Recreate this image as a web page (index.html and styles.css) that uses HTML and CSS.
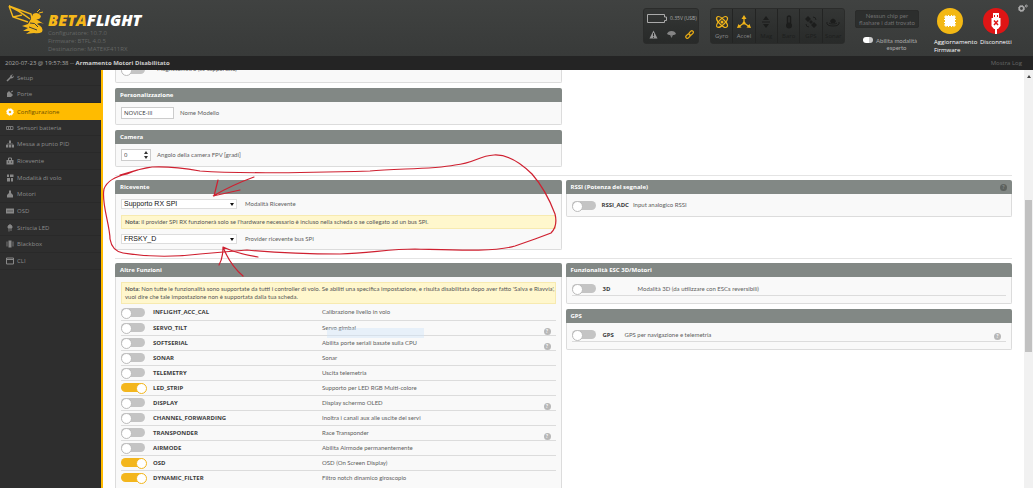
FILE: index.html
```html
<!doctype html>
<html lang="it">
<head>
<meta charset="utf-8">
<title>Betaflight Configurator</title>
<meta name="viewport" content="width=device-width,initial-scale=1">
<link rel="stylesheet" href="styles.css">
</head>
<body>

<header class="topbar">
  <div class="brand">
    <svg class="bee" viewBox="0 0 38 30" aria-hidden="true">
      <path d="M1 1 L23 9 L24 14 M1 1 L5 12 L20 17 M1 1 Q12 6 22 14 M5 12 L14 10" fill="none" stroke="#f5b81a" stroke-width="1.4"/>
      <path d="M25 9 Q30 6 33 11 Q32 15 28 14 L36 19 Q32 17 29 19 Q36 22 34 27 Q31 29 26 28 L18 29 L22 26 L15 26 L20 23 L14 21 L20 19 L23 14 Z" fill="#f5b81a"/>
      <path d="M29 7 L32 4 M31 8 L35 7" stroke="#f5b81a" fill="none"/>
      <path d="M22 18 Q27 17 30 22 M21 22 L29 25" stroke="#3b3c3b" fill="none"/>
    </svg>
    <div class="brand-text">
      <div class="logo"><span>BETA</span>FLIGHT</div>
      <div class="versions">Configuratore: 10.7.0<br>Firmware: BTFL 4.0.5<br>Destinazione: MATEKF411RX</div>
    </div>
  </div>

  <div class="panel battery">
    <div class="battery-top">
      <svg width="20" height="9" viewBox="0 0 20 9" aria-hidden="true"><path d="M.5 .5H17.5V3H19.5V6.500H17.5V8.500H.5Z" fill="none" stroke="#aaa"/></svg>
      <span>0.35V (USB)</span>
    </div>
    <div class="battery-icons">
      <svg width="9" height="9" viewBox="0 0 9 9" aria-hidden="true"><path d="M4.500 .5L8.500 8.500H.5Z" fill="#999"/><path d="M4.500 3V6M4.500 6.800V7.800" stroke="#2a2a2a"/></svg>
      <svg width="9" height="9" viewBox="0 0 9 9" aria-hidden="true"><path d="M0 4Q1 1 4.500 1T9 4L7 5H2Z" fill="#858585"/><path d="M3 5H6L4.500 8Z" fill="#777"/></svg>
      <svg width="9" height="9" viewBox="0 0 9 9" aria-hidden="true"><g fill="none" stroke="#e5a915" stroke-width="1.2"><rect x="3.600" y="1.600" width="5" height="3" rx="1.500" transform="rotate(-45 6 3)"/><rect x=".4" y="4.600" width="5" height="3" rx="1.500" transform="rotate(-45 3 6)"/></g></svg>
    </div>
  </div>

  <div class="panel sensors">
    <div class="sensor on">
      <svg viewBox="0 0 14 14" aria-hidden="true"><g fill="none" stroke="#f0b41a" stroke-width="1.200"><ellipse cx="7" cy="7" rx="7" ry="2.800" transform="rotate(45 7 7)"/><ellipse cx="7" cy="7" rx="7" ry="2.800" transform="rotate(-45 7 7)"/></g><circle cx="7" cy="7" r="1.500" fill="#f0b41a"/></svg>
      <span>Gyro</span>
    </div>
    <div class="sensor on">
      <svg viewBox="0 0 14 14" aria-hidden="true"><path d="M7 8V2M7 8L2 11.500M7 8L12 11.500" stroke="#f0b41a" stroke-width="1.300"/><path d="M7 0L9.500 4H4.500ZM0 13L1.500 9L4.500 12.500ZM14 13L12.500 9L9.500 12.500Z" fill="#f0b41a"/><circle cx="7" cy="8" r="1.500" fill="#f0b41a"/></svg>
      <span>Accel</span>
    </div>
    <div class="sensor">
      <svg viewBox="0 0 14 14" aria-hidden="true"><path d="M7 1L10 5H4ZM7 13L10 9H4Z" fill="#1c1d1c"/><path d="M3 7H11" stroke="#1c1d1c"/></svg>
      <span>Mag</span>
    </div>
    <div class="sensor">
      <svg viewBox="0 0 14 14" aria-hidden="true"><path d="M5.500 8V2Q7 0 8.500 2V8" fill="none" stroke="#1c1d1c" stroke-width="1.500"/><circle cx="7" cy="10.500" r="3" fill="#1c1d1c"/></svg>
      <span>Baro</span>
    </div>
    <div class="sensor">
      <svg viewBox="0 0 14 14" aria-hidden="true"><path d="M1 4L4 1L7 4L4 7ZM7 10L10 7L13 10L10 13ZM5 7L7 5L9 7L7 9Z" fill="#1c1d1c"/><path d="M9 2Q12 2 12 5M2 9Q2 12 5 12" fill="none" stroke="#1c1d1c"/></svg>
      <span>GPS</span>
    </div>
    <div class="sensor">
      <svg viewBox="0 0 14 14" aria-hidden="true"><path d="M4 6Q7 1 10 6L9 8H5Z" fill="#1c1d1c"/><path d="M1 7Q0 11 7 11T13 7M3 8Q4 9 7 9T11 8" fill="none" stroke="#1c1d1c"/></svg>
      <span>Sonar</span>
    </div>
  </div>

  <div class="flash">
    <div class="dataflash">Nessun chip per<br>flashare i dati trovato</div>
    <label class="expert"><input type="checkbox" class="mini"><span>Abilita modalità<br>esperto</span></label>
  </div>

  <button type="button" class="round-btn fw">
    <svg viewBox="0 0 26 26" aria-hidden="true"><circle cx="13" cy="13" r="13" fill="#f3b814"/><rect x="8" y="8" width="10" height="10" rx="1" fill="#fff"/><path d="M9 7V19M11.500 7V19M14.500 7V19M17 7V19M7 9H19M7 11.500H19M7 14.500H19M7 17H19" stroke="#fff"/></svg>
    <span>Aggiornamento<br>Firmware</span>
  </button>
  <button type="button" class="round-btn">
    <svg viewBox="0 0 26 26" aria-hidden="true"><circle cx="13" cy="13" r="13" fill="#df1515"/><path d="M10 5H16V10H17.500V18L15 21H14V26H12V21H11L8.500 18V10H10Z" fill="#fff"/><path d="M11.500 7V9M14.500 7V9" stroke="#df1515"/><path d="M11 12.500L15 17M15 12.500L11 17" stroke="#df1515" stroke-width="1.500"/></svg>
    <span>Disconnetti</span>
  </button>
  <svg class="gear" viewBox="0 0 10 8" aria-hidden="true"><circle cx="3.500" cy="4.500" r="2.200" fill="none" stroke="#aaa" stroke-width="1.500"/><circle cx="3.500" cy="4.500" r="3.100" fill="none" stroke="#aaa" stroke-dasharray="1.200 1.200"/><circle cx="8.300" cy="2" r="1" fill="none" stroke="#aaa"/></svg>
</header>

<div class="logbar">
  <div>2020-07-23 @ 19:57:38 -- <b>Armamento Motori Disabilitato</b></div>
  <a href="#log">Mostra Log</a>
</div>

<div class="main">
  <nav class="tabs">
    <a href="#setup"><svg viewBox="0 0 8 8"><path d="M1 7L5 3" stroke="#888" stroke-width="1.600"/><path d="M4 3Q4 0 7 .5L5.500 2L6.500 3L7.800 1.500Q8 4.500 5 4.500Z" fill="#888"/></svg>Setup</a>
    <a href="#ports"><svg viewBox="0 0 8 8"><path d="M1 3L3 1L7 5L5 7H1Z" fill="#888"/><path d="M5 2L7 1M1 7L3 5" stroke="#888"/></svg>Porte</a>
    <a href="#config" class="active"><svg viewBox="0 0 8 8"><circle cx="4" cy="4" r="2.300" fill="none" stroke="#fff" stroke-width="2"/><circle cx="4" cy="4" r="3.300" fill="none" stroke="#fff" stroke-dasharray="1.300 1.300"/></svg>Configurazione</a>
    <a href="#power"><svg viewBox="0 0 8 8"><path d="M.5 2.500H7V5.500H.5ZM2.500 2.500V5.500M4.500 2.500V5.500" fill="none" stroke="#777"/></svg>Sensori batteria</a>
    <a href="#pid"><svg viewBox="0 0 8 8"><path d="M3 .5H5V3H3ZM0 5H2.300V7.500H0ZM3 5H5V7.500H3ZM5.700 5H8V7.500H5.700Z" fill="#888"/><path d="M4 3V5M1 5V4H7V5" fill="none" stroke="#888" stroke-width=".7"/></svg>Messa a punto PID</a>
    <a href="#receiver"><svg viewBox="0 0 8 8"><path d="M.5 3H7.500V7.500H.5Z" fill="#888"/><path d="M2.500 3V1H5.500V3" fill="none" stroke="#888"/><path d="M2 5H3M5 5H6" stroke="#2e2e2e"/></svg>Ricevente</a>
    <a href="#modes"><svg viewBox="0 0 8 8"><path d="M1 .5H3V3H1ZM4 .5H7.500V3H4ZM1 4H4V7.500H1ZM5 4H7V7.500H5Z" fill="#888"/></svg>Modalità di volo</a>
    <a href="#motors"><svg viewBox="0 0 8 8"><path d="M3 .5H5V3L7 5V7.500H1V5L3 3Z" fill="#888"/></svg>Motori</a>
    <a href="#osd"><svg viewBox="0 0 8 8"><path d="M0 1.500H8V6.500H0Z" fill="#888"/><path d="M1 4H7" stroke="#444" stroke-width=".7"/></svg>OSD</a>
    <a href="#led"><svg viewBox="0 0 8 8"><path d="M2 4V2Q4 -1 6 2V4ZM3 4V7.500M5 4V7" fill="#888" stroke="#888" stroke-width=".8"/></svg>Striscia LED</a>
    <a href="#blackbox"><svg viewBox="0 0 8 8"><path d="M2.500 .5H5.500V7.500H2.500Z" fill="#888"/><path d="M1 1.500V6.500M7 1.500V6.500" stroke="#777"/></svg>Blackbox</a>
    <a href="#cli"><svg viewBox="0 0 8 8"><path d="M.5 1H7.500V7H.5ZM.5 2.500H7.500" fill="none" stroke="#888"/></svg>CLI</a>
  </nav>

  <main class="content">
    <section class="grid first">
      <div class="col">
        <div class="card">
          <div class="card-body cut">
            <input type="checkbox" class="toggle" id="mag"><label for="mag">Magnetometro (se supportato)</label>
          </div>
        </div>
        <div class="card">
          <h2>Personalizzazione</h2>
          <div class="card-body line">
            <input type="text" class="name" id="craft" value="NOVICE-III"><label for="craft">Nome Modello</label>
          </div>
        </div>
        <div class="card">
          <h2>Camera</h2>
          <div class="card-body line">
            <span class="spin"><input type="number" id="fpv" value="0"></span><label for="fpv">Angolo della camera FPV [gradi]</label>
          </div>
        </div>
      </div>
    </section>

    <section class="grid">
      <div class="card">
        <h2>Ricevente</h2>
        <div class="card-body">
          <div class="field">
            <span class="drop"><select id="rxmode"><option>Supporto RX SPI</option></select></span><label for="rxmode">Modalità Ricevente</label>
          </div>
          <p class="note"><b>Nota:</b> il provider SPI RX funzionerà solo se l'hardware necessario è incluso nella scheda o se collegato ad un bus SPI.</p>
          <div class="field">
            <span class="drop"><select id="rxspi"><option>FRSKY_D</option></select></span><label for="rxspi">Provider ricevente bus SPI</label>
          </div>
        </div>
      </div>
      <div class="col">
        <div class="card">
          <h2>RSSI (Potenza del segnale)<span class="help dark">?</span></h2>
          <div class="card-body line">
            <input type="checkbox" class="toggle" id="rssi"><label for="rssi"><b>RSSI_ADC</b>Input analogico RSSI</label>
          </div>
        </div>
      </div>
    </section>

    <section class="grid">
      <div class="card">
        <h2>Altre Funzioni</h2>
        <div class="card-body">
          <p class="note wide"><b>Nota:</b> Non tutte le funzionalità sono supportate da tutti i controller di volo. Se abiliti una specifica impostazione, e risulta disabilitata dopo aver fatto 'Salva e Riavvia', vuoi dire che tale impostazione non è supportata dalla tua scheda.</p>
          <table class="features">
            <tr><td><input type="checkbox" class="toggle" id="f1"></td><th><label for="f1">INFLIGHT_ACC_CAL</label></th><td>Calibrazione livello in volo</td><td></td></tr>
            <tr><td><input type="checkbox" class="toggle" id="f2"></td><th><label for="f2">SERVO_TILT</label></th><td>Servo gimbal</td><td><span class="help">?</span></td></tr>
            <tr><td><input type="checkbox" class="toggle" id="f3"></td><th><label for="f3">SOFTSERIAL</label></th><td>Abilita porte seriali basate sulla CPU</td><td><span class="help">?</span></td></tr>
            <tr><td><input type="checkbox" class="toggle" id="f4"></td><th><label for="f4">SONAR</label></th><td>Sonar</td><td></td></tr>
            <tr><td><input type="checkbox" class="toggle" id="f5"></td><th><label for="f5">TELEMETRY</label></th><td>Uscita telemetria</td><td></td></tr>
            <tr><td><input type="checkbox" class="toggle" id="f6" checked></td><th><label for="f6">LED_STRIP</label></th><td>Supporto per LED RGB Multi-colore</td><td></td></tr>
            <tr><td><input type="checkbox" class="toggle" id="f7"></td><th><label for="f7">DISPLAY</label></th><td>Display schermo OLED</td><td><span class="help">?</span></td></tr>
            <tr><td><input type="checkbox" class="toggle" id="f8"></td><th><label for="f8">CHANNEL_FORWARDING</label></th><td>Inoltra i canali aux alle uscite dei servi</td><td></td></tr>
            <tr><td><input type="checkbox" class="toggle" id="f9"></td><th><label for="f9">TRANSPONDER</label></th><td>Race Transponder</td><td><span class="help">?</span></td></tr>
            <tr><td><input type="checkbox" class="toggle" id="f10"></td><th><label for="f10">AIRMODE</label></th><td>Abilita Airmode permanentemente</td><td></td></tr>
            <tr><td><input type="checkbox" class="toggle" id="f11" checked></td><th><label for="f11">OSD</label></th><td>OSD (On Screen Display)</td><td></td></tr>
            <tr><td><input type="checkbox" class="toggle" id="f12" checked></td><th><label for="f12">DYNAMIC_FILTER</label></th><td>Filtro notch dinamico giroscopio</td><td></td></tr>
          </table>
        </div>
      </div>
      <div class="col">
        <div class="card">
          <h2>Funzionalità ESC 3D/Motori</h2>
          <div class="card-body">
            <div class="feature-row wide-name"><input type="checkbox" class="toggle" id="esc3d"><label for="esc3d"><b>3D</b>Modalità 3D (da utilizzare con ESCs reversibili)</label></div>
          </div>
        </div>
        <div class="card">
          <h2>GPS</h2>
          <div class="card-body">
            <div class="feature-row"><input type="checkbox" class="toggle" id="gps"><label for="gps"><b>GPS</b>GPS per navigazione e telemetria</label><span class="help">?</span></div>
          </div>
        </div>
      </div>
    </section>
  </main>

  <div class="scrollbar"><span class="arrow"></span><span class="thumb"></span></div>
</div>

<div class="ghost"></div>
<!-- hand-drawn marks around the receiver card -->
<svg class="marks" width="480" height="130" viewBox="100 150 480 130" aria-hidden="true">
  <path d="M152 167Q141 168 127 174Q108 178 104 189C101 203 110 225 110 239Q112 251 123 253Q160 259 200 254L247 250Q290 254 340 254C370 253 390 249 415 249C455 250 495 252 515 246L535 239L551 233Q558 226 555 214Q546 190 532 174Q512 154 494 155C478 156 475 163 455 165C430 170 395 168 370 171C300 173 240 174 200 171Q172 166 152 167L137 170L120 175"/>
  <path d="M254 177Q232 185 213 196L240 190M218 180L214 196"/>
  <path d="M243 276Q230 265 223 247Q223 258 219 265M223 247Q238 254 258 257"/>
</svg>
</body>
</html>
```
FILE: styles.css
```css
:root {
  --accent: #ffbb00;
  --line: #dcdcdc;
  --head: #828885;
}
* { box-sizing: border-box; }
body {
  margin: 0;
  height: 100vh;
  display: flex;
  flex-direction: column;
  overflow: hidden;
  font-family: "Open Sans", sans-serif;
  font-size: 6px;
  line-height: 8px;
  color: #606060;
  background: #fff;
}
a { color: inherit; text-decoration: none; }
button, input, select { font-family: inherit; margin: 0; }

/* top bar */
.topbar {
  flex: none;
  height: 56px;
  display: flex;
  align-items: flex-start;
  padding: 8px 5px 0 8px;
  background: linear-gradient(#404241, #383a39);
}
.brand { display: flex; gap: 2px; margin-right: auto; }
.bee { width: 38px; height: 30px; margin-top: -3px; }
.logo {
  margin-top: 4px;
  font-size: 16px;
  line-height: 17px;
  font-weight: 800;
  font-style: italic;
  color: #fff;
}
.logo span { color: #f5b81a; }
.versions { color: #646665; }

.panel {
  height: 36px;
  border-radius: 3px;
  background: linear-gradient(#343635, #282a29);
  border: 1px solid #2b2c2b;
}
.battery { width: 56px; margin-right: 11px; }
.battery-top {
  height: 18px;
  display: flex;
  align-items: center;
  gap: 3px;
  padding-left: 3px;
  color: #aaa;
  font-size: 5px;
  white-space: nowrap;
}
.battery-icons { display: flex; justify-content: space-around; padding-top: 3px; }
.sensors { width: 135px; display: flex; margin-right: 10px; }
.sensor {
  flex: 1;
  display: flex;
  flex-direction: column;
  align-items: center;
  gap: 3px;
  padding-top: 6px;
  border-right: 1px solid #232423;
  color: #1c1d1c;
}
.sensor:last-child { border-right: 0; }
.sensor svg { width: 14px; height: 14px; }
.sensor.on { color: #8c8c8c; }

.flash {
  width: 64px;
  margin-right: 15px;
  padding-top: 2px;
  text-align: center;
  font-family: Lato, sans-serif;
}
.dataflash {
  height: 18px;
  padding-top: 1px;
  border-radius: 2px;
  background: #2c2e2d;
  border: 1px solid #2a2b2a;
  color: #717171;
  line-height: 7px;
  white-space: nowrap;
}
.expert {
  display: flex;
  gap: 3px;
  margin-top: 9px;
  padding-left: 8px;
  color: #aaa;
  line-height: 7px;
  white-space: nowrap;
}
.mini {
  appearance: none;
  width: 10px;
  height: 6px;
  border-radius: 3px;
  background: linear-gradient(90deg, #fff 60%, #ccc 60%);
}
.round-btn {
  width: 33px;
  padding: 0;
  border: 0;
  background: none;
  color: #fff;
  font-size: 6px;
  line-height: 8px;
  text-align: left;
  display: flex;
  flex-direction: column;
  align-items: flex-start;
  gap: 4px;
}
.round-btn svg { width: 26px; height: 26px; margin-left: 3px; }
.round-btn.fw { width: 46px; }
.gear { width: 10px; height: 8px; margin: -4px 0 0 5px; }

.logbar {
  flex: none;
  height: 14px;
  display: flex;
  align-items: center;
  justify-content: space-between;
  padding: 0 11px 0 5px;
  background: #242424;
  color: #aaa;
}
.logbar b { color: #ccc; }
.logbar a { color: #666; }

/* layout */
.main { flex: 1; min-height: 0; display: flex; }
.tabs {
  flex: none;
  width: 103px;
  border-right: 2px solid var(--accent);
  background: #2e2e2e;
  color: #8d8d8d;
}
.tabs a {
  height: 17px;
  display: flex;
  align-items: center;
  gap: 3px;
  padding-left: 6px;
  border-bottom: 1px solid #292929;
}
.tabs a:nth-child(3n+1) { height: 16px; }
.tabs svg { width: 8px; height: 8px; }
.tabs .active { background: var(--accent); color: #6b4e00; border: 0; }

.content { flex: 1; min-width: 0; padding: 0 12px; overflow: hidden; }
.grid {
  display: grid;
  grid-template-columns: 1fr 1fr;
  gap: 4px;
  align-items: start;
  margin-bottom: 8px;
  padding-top: 4px;
  border-top: 1px solid #e4e4e4;
}
.grid.first { padding: 0; border: 0; }
.col { display: grid; gap: 5px; }

.card h2 {
  margin: 0;
  height: 14px;
  padding: 0 5px;
  display: flex;
  align-items: center;
  justify-content: space-between;
  border-radius: 2px 2px 0 0;
  background: var(--head);
  color: #fff;
  font-size: 6px;
  font-weight: 700;
}
.card-body {
  padding: 5px;
  background: #f9f9f9;
  border: 1px solid var(--line);
  border-top: 0;
  border-radius: 0 0 2px 2px;
  font-family: Lato, sans-serif;
}
.card-body.line { height: 23px; display: flex; align-items: center; gap: 6px; padding: 0 5px; }
.card-body.cut { height: 13px; padding: 0 5px; display: flex; gap: 12px; align-items: flex-start; }
.cut .toggle, .cut label { margin-top: -5px; }
.field { height: 10px; display: flex; align-items: center; gap: 8px; }
.note {
  margin: 6px 0 5px;
  padding: 2px 0 2px 3px;
  background: #fff7cd;
  border: 1px solid #f7eab0;
  color: #555;
}
.note.wide { margin: 0 0 1px; }

/* controls */
.toggle {
  appearance: none;
  flex: none;
  display: block;
  width: 24px;
  height: 9px;
  border-radius: 5px;
  background: #c4c4c4;
}
.toggle::before {
  content: "";
  display: block;
  width: 9px;
  height: 9px;
  border-radius: 50%;
  border: 1px solid #bbb;
  background: #fff;
}
.toggle:checked { background: #f3b61d; }
.toggle:checked::before { margin-left: 15px; border-color: #f3b61d; }
.name, .spin input {
  height: 12px;
  padding: 0 2px;
  border: 1px solid #ccc;
  background: #fff;
  color: #333;
  font-family: "Open Sans", sans-serif;
  font-size: 6px;
}
.name { width: 53px; }
.spin { display: flex; position: relative; }
.spin input { width: 30px; appearance: textfield; }
.spin::before, .spin::after {
  content: "";
  position: absolute;
  right: 3px;
  border: 2px solid transparent;
}
.spin::before { top: 0; border-bottom: 3px solid #333; }
.spin::after { bottom: 0; border-top: 3px solid #333; }
.drop { position: relative; display: flex; }
.drop select {
  appearance: none;
  width: 116px;
  height: 10px;
  padding: 0 2px;
  border: 1px solid #ddd;
  background: #fff;
  color: #111;
  font: 7px/8px "Liberation Sans", Arial, sans-serif;
}
.drop::after {
  content: "";
  position: absolute;
  right: 3px;
  top: 4px;
  border: 2px solid transparent;
  border-top: 3px solid #111;
}
.help {
  display: block;
  width: 7px;
  height: 7px;
  border-radius: 50%;
  background: #b8b8b8;
  color: #fff;
  font-size: 5px;
  line-height: 7px;
  font-weight: 700;
  text-align: center;
}
.help.dark { background: #5d625f; color: #828885; }

.features { width: 100%; border-collapse: collapse; table-layout: fixed; }
.features td, .features th { height: 15px; padding: 0; text-align: left; border-bottom: 1px solid var(--line); }
.features tr:last-child > * { border-bottom: 0; }
.features td:first-child { width: 32px; }
.features th { width: 169px; }
.features td:last-child { width: 12px; vertical-align: bottom; }

.feature-row {
  display: flex;
  align-items: center;
  gap: 7px;
  height: 14px;
  margin-bottom: 2px;
  border-bottom: 1px solid var(--line);
}
.feature-row .help { margin: 4px 5px 0 auto; }
.features th, label b { font-family: "Open Sans", sans-serif; color: #3c3c3c; }
label b { display: inline-block; margin-right: 4px; }
.feature-row b { width: 18px; }
.wide-name b { width: 31px; }

.scrollbar { flex: none; width: 9px; background: #f1f1f1; padding: 3px 1px; }
.arrow { display: block; width: 0; margin: 0 auto; border: 2px solid transparent; border-bottom: 3px solid #444; }
.thumb { display: block; height: 37%; margin-top: 122px; background: #c1c1c1; }

/* overlays */
.ghost { position: absolute; left: 327px; top: 328px; width: 97px; height: 10px; background: rgba(205, 228, 250, .4); }
.marks { position: absolute; left: 100px; top: 150px; pointer-events: none; }
.marks path { fill: none; stroke: #cf2030; stroke-width: 1.2; stroke-linecap: round; }
```
